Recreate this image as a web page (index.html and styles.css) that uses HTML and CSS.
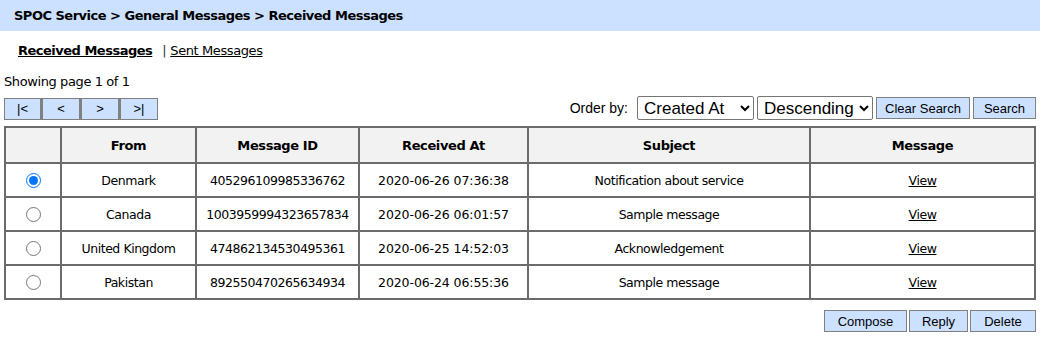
FILE: index.html
```html
<!DOCTYPE html>
<html>
<head>
<meta charset="utf-8">
<link rel="stylesheet" href="styles.css">
</head>
<body>
<div class="crumb">SPOC Service &gt; General Messages &gt; Received Messages</div>
<div class="tabs"><a class="tab active" href="#">Received Messages</a><span class="sep">|</span><a class="tab" href="#">Sent Messages</a></div>
<div class="page">
  <div class="showing">Showing page 1 of 1</div>
  <div class="toolbar">
    <div class="pager">
      <button class="btn pbtn">|&lt;</button><button class="btn pbtn">&lt;</button><button class="btn pbtn">&gt;</button><button class="btn pbtn">&gt;|</button>
    </div>
    <div class="order">
      <span class="olabel">Order by:</span>
      <select class="sel sel1"><option>Created At</option></select>
      <select class="sel sel2"><option>Descending</option></select>
      <button class="btn cbtn">Clear Search</button>
      <button class="btn sbtn">Search</button>
    </div>
  </div>
  <table class="grid">
    <colgroup><col class="c0"><col class="c1"><col class="c2"><col class="c3"><col class="c4"><col class="c5"></colgroup>
    <thead><tr><th></th><th>From</th><th>Message ID</th><th>Received At</th><th>Subject</th><th>Message</th></tr></thead>
    <tbody>
      <tr><td><input type="radio" name="m" checked></td><td>Denmark</td><td>405296109985336762</td><td class="dt">2020-06-26 07:36:38</td><td>Notification about service</td><td><a href="#">View</a></td></tr>
      <tr><td><input type="radio" name="m"></td><td>Canada</td><td>1003959994323657834</td><td class="dt">2020-06-26 06:01:57</td><td>Sample message</td><td><a href="#">View</a></td></tr>
      <tr><td><input type="radio" name="m"></td><td>United Kingdom</td><td>474862134530495361</td><td class="dt">2020-06-25 14:52:03</td><td>Acknowledgement</td><td><a href="#">View</a></td></tr>
      <tr><td><input type="radio" name="m"></td><td>Pakistan</td><td>892550470265634934</td><td class="dt">2020-06-24 06:55:36</td><td>Sample message</td><td><a href="#">View</a></td></tr>
    </tbody>
  </table>
  <div class="actions">
    <button class="btn abtn1">Compose</button><button class="btn abtn2">Reply</button><button class="btn abtn3">Delete</button>
  </div>
</div>
</body>
</html>
```
FILE: styles.css
```css
html, body { margin: 0; padding: 0; background: #fff; }
body { font-family: "DejaVu Sans", Verdana, sans-serif; font-size: 12px; color: #000; letter-spacing: -0.4px; }
.crumb { width: 1040px; height: 31px; box-sizing: border-box; background: #cce0ff; font-weight: bold; padding: 8px 0 0 14px; font-size: 13px; letter-spacing: -0.5px; }
.tabs { padding: 12px 0 0 18px; height: 22px; box-sizing: border-box; font-size: 13px; }
.tab { color: #000; text-decoration: underline; }
.tab.active { font-weight: bold; letter-spacing: -0.5px; }
.sep { margin: 0 4px 0 10px; color: #333; }
.page { padding: 0 6px 0 4px; }
.showing { margin-top: 21px; height: 15px; font-size: 13px; }
.toolbar { display: flex; justify-content: space-between; align-items: center; margin-top: 7px; height: 24px; }
.btn { font-family: "Liberation Sans", Arial, sans-serif; font-size: 13px; letter-spacing: 0; background: #cce0ff; border: 1px solid #808080; height: 22px; padding: 0; margin: 0; color: #000; }
.pager { display: flex; gap: 0; margin-top: 1px; }
.pbtn { width: 39px; border-left-width: 2px; }
.pbtn:first-child { border-left-width: 1px; width: 37px; }
.order { display: flex; align-items: center; gap: 3px; }
.olabel { font-family: "Liberation Sans", Arial, sans-serif; font-size: 14px; letter-spacing: 0; margin-right: 6px; margin-left: 3px; }
.sel { font-family: "Liberation Sans", Arial, sans-serif; font-size: 17px; letter-spacing: 0; height: 24px; border: 1px solid #767676; border-radius: 2px; background: #fff; padding: 0 2px; }
.sel1 { width: 117px; }
.sel2 { width: 116px; }
.cbtn { width: 94px; }
.sbtn { width: 63px; }
.grid { margin-top: 6px; width: 1032px; border-collapse: collapse; border: 2px solid #6b6b6b; }
.grid th, .grid td { border: 2px solid #6b6b6b; text-align: center; padding: 0; }
.grid th { background: #f2f2f2; height: 34px; font-weight: bold; font-size: 13px; }
.grid td { height: 32px; font-size: 12.5px; letter-spacing: -0.45px; }
.grid td.dt { letter-spacing: -0.1px; }
.grid input { margin: 0; width: 15px; height: 15px; vertical-align: middle; }
.grid a { color: #000; }
.c0 { width: 56px; } .c1 { width: 135px; } .c2 { width: 163px; } .c3 { width: 169px; } .c4 { width: 282px; }
.actions { display: flex; justify-content: flex-end; gap: 2px; margin-top: 10px; }
.abtn1 { width: 83px; } .abtn2 { width: 59px; } .abtn3 { width: 66px; }
```
